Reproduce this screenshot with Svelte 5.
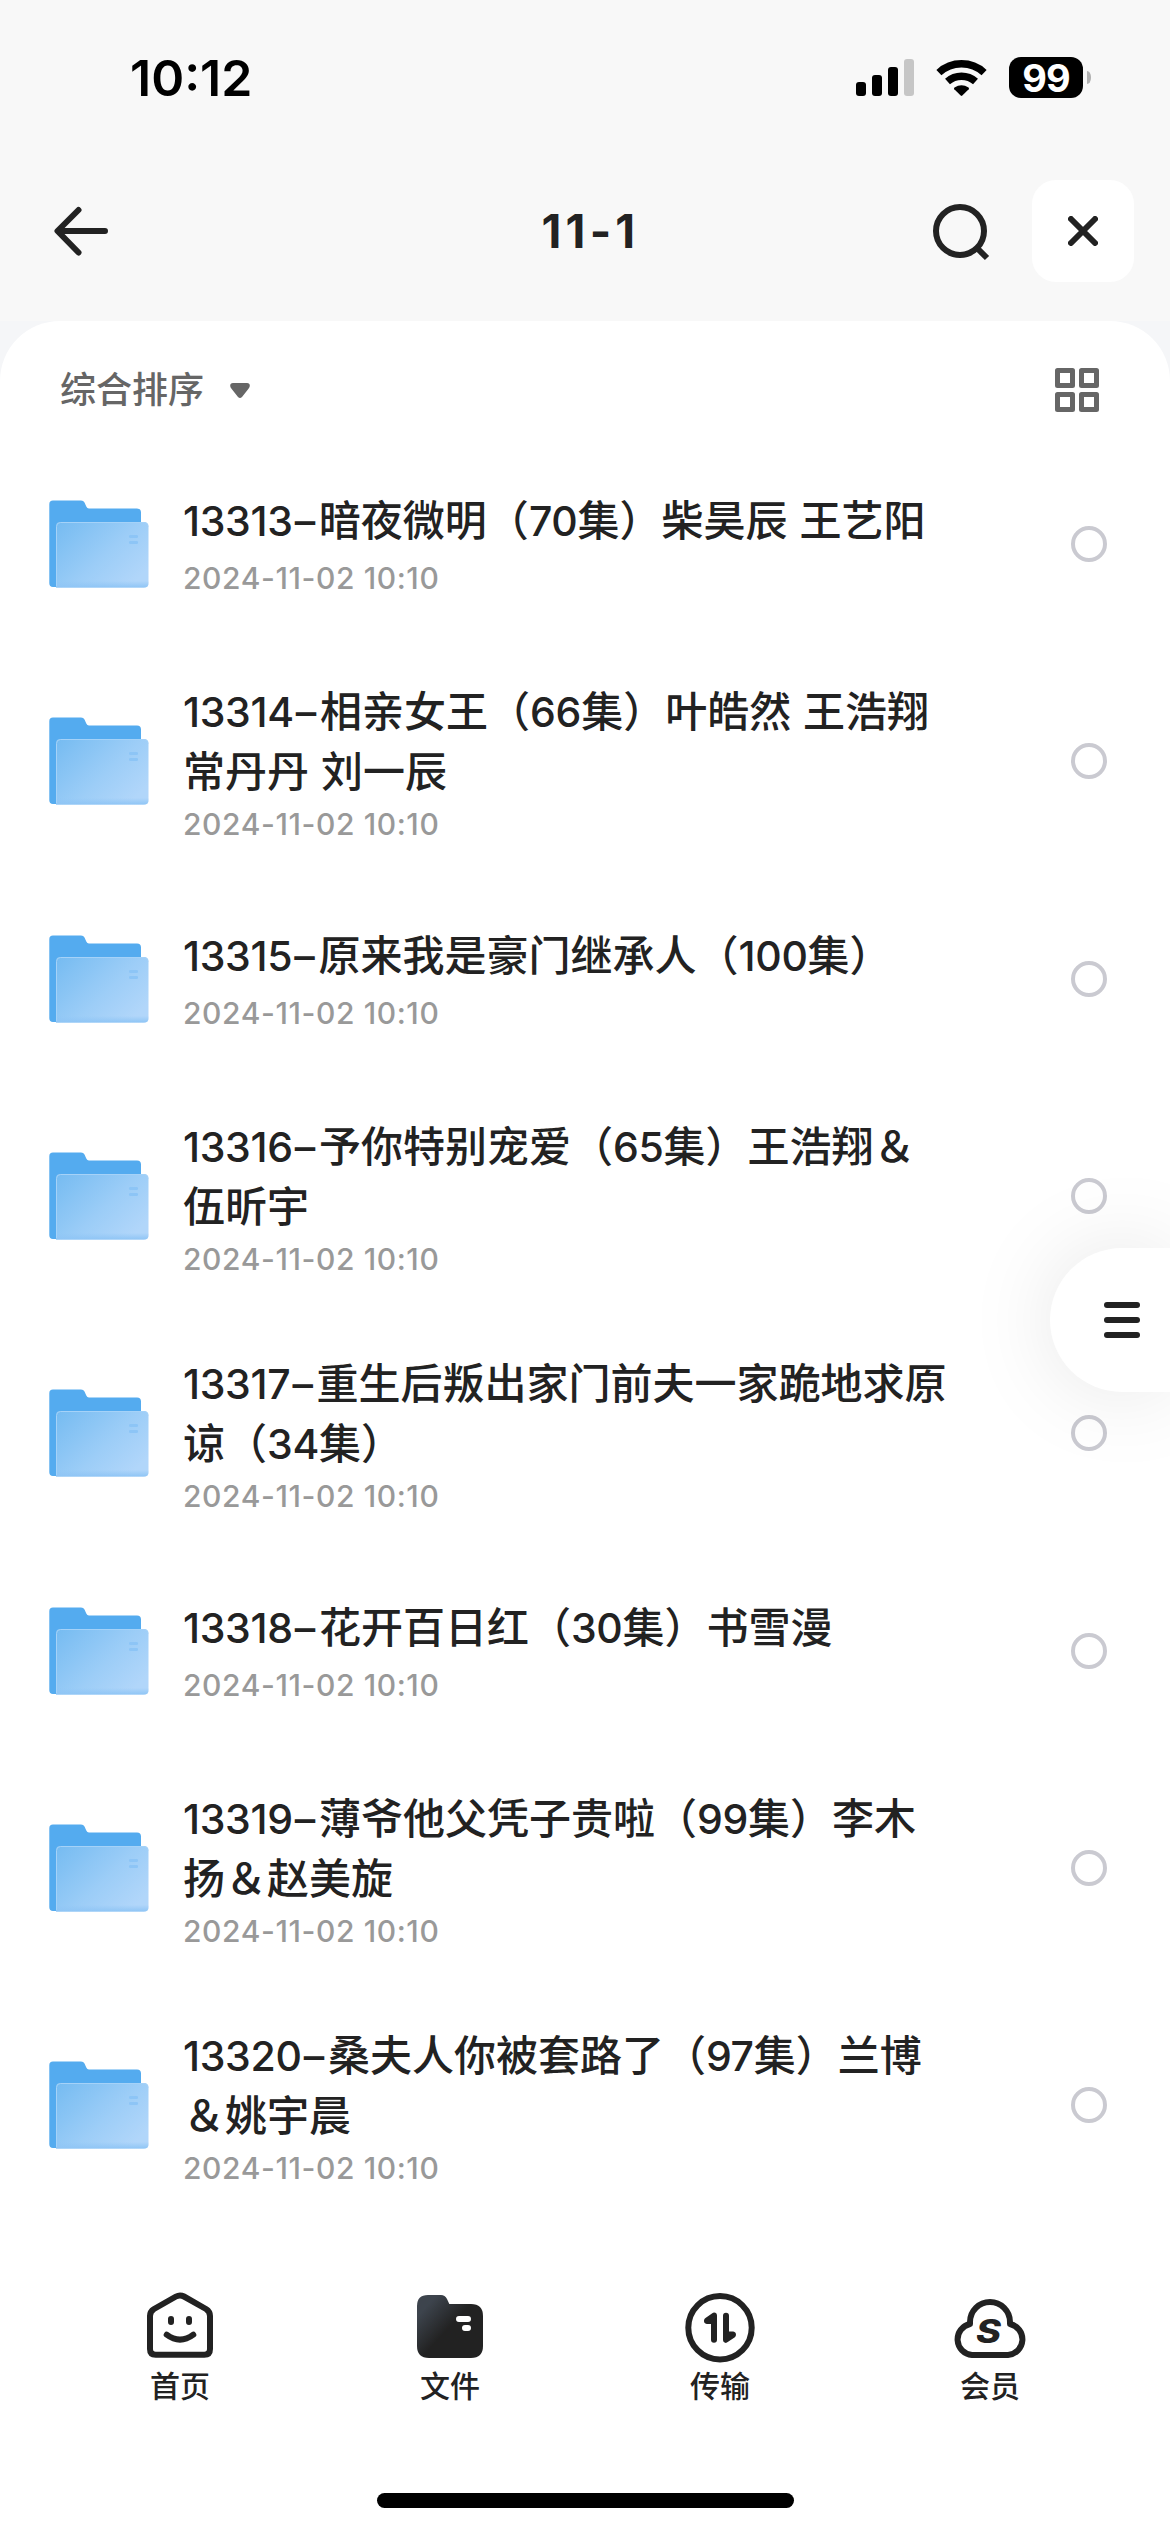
<script lang="ts">
	interface FileItem {
		title: string;
		date: string;
	}

	const files: FileItem[] = [
		{ title: '13313–暗夜微明（70集）柴昊辰 王艺阳', date: '2024-11-02 10:10' },
		{ title: '13314–相亲女王（66集）叶皓然 王浩翔\n常丹丹 刘一辰', date: '2024-11-02 10:10' },
		{ title: '13315–原来我是豪门继承人（100集）', date: '2024-11-02 10:10' },
		{ title: '13316–予你特别宠爱（65集）王浩翔＆\n伍昕宇', date: '2024-11-02 10:10' },
		{ title: '13317–重生后叛出家门前夫一家跪地求原\n谅（34集）', date: '2024-11-02 10:10' },
		{ title: '13318–花开百日红（30集）书雪漫', date: '2024-11-02 10:10' },
		{ title: '13319–薄爷他父凭子贵啦（99集）李木\n扬＆赵美旋', date: '2024-11-02 10:10' },
		{ title: '13320–桑夫人你被套路了（97集）兰博\n＆姚宇晨', date: '2024-11-02 10:10' }
	];

	const tabs = [
		{ id: 'home', label: '首页' },
		{ id: 'files', label: '文件' },
		{ id: 'transfer', label: '传输' },
		{ id: 'member', label: '会员' }
	];

	// digits and dashes get their own spacing, so split them from the Chinese text
	function runs(text: string) {
		return text.split(/([0-9]+|–)/).filter(Boolean);
	}
</script>

<div class="screen">
	<div class="status-bar">
		<span class="time">10:12</span>
		<div class="status-icons">
			<svg class="signal" width="58" height="38" viewBox="0 0 58 38">
				<rect x="0" y="23" width="10" height="14" rx="3" />
				<rect x="16" y="16" width="10" height="21" rx="3" />
				<rect x="32" y="8" width="10" height="29" rx="3" />
				<rect x="48" y="0" width="10" height="37" rx="3" fill="#c6c6c6" />
			</svg>
			<svg class="wifi" width="52" height="38" viewBox="0 0 52 38">
				<path d="M2.9 13.6a33.4 33.4 0 0 1 45.2 0" fill="none" stroke="#000" stroke-width="7.4" />
				<path d="M11.5 22.6a21 21 0 0 1 28 0" fill="none" stroke="#000" stroke-width="7.4" />
				<path d="M18.3 30.2q-.8-.9.2-1.6a12.3 12.3 0 0 1 14 0q1 .7.2 1.6l-6.4 6.4q-.8.8-1.6 0z" />
			</svg>
			<div class="battery">99</div>
			<div class="battery-tip"></div>
		</div>
	</div>

	<header>
		<button class="back" aria-label="返回">
			<svg width="60" height="60" viewBox="0 0 60 60" fill="none" stroke="#222" stroke-width="6" stroke-linecap="round" stroke-linejoin="round">
				<path d="M27.5 9L6.5 30l21 21.500M7 30h47" />
			</svg>
		</button>
		<h1>11-1</h1>
		<div class="actions">
			<svg width="60" height="60" viewBox="0 0 60 60" fill="none" stroke="#222" stroke-width="6">
				<circle cx="30" cy="30" r="24" />
				<path d="M46.500 46.500l10.500 10.500" />
			</svg>
			<button class="close" aria-label="关闭">
				<svg width="30" height="30" viewBox="0 0 30 30" fill="none" stroke="#222" stroke-width="6" stroke-linecap="round">
					<path d="M3 3l24 24M27 3L3 27" />
				</svg>
			</button>
		</div>
	</header>

	<main>
		<div class="sheet">
			<div class="toolbar">
				<div class="sort">
					<span>综合排序</span>
					<svg width="20" height="16" viewBox="0 0 20 16" fill="#666">
						<path d="M3 1h14q3 .3 2.800 3q-.2 1.500-1.500 3L12 15q-2 2-4 0L1.700 7Q.3 5.500.2 4 0 1.300 3 1z" />
					</svg>
				</div>
				<svg width="44" height="44" viewBox="0 0 44 44" fill="none" stroke="#666" stroke-width="5" stroke-linejoin="round">
					<rect x="2.500" y="2.500" width="15" height="15" />
					<rect x="26.500" y="2.500" width="15" height="15" />
					<rect x="2.500" y="26.500" width="15" height="15" />
					<rect x="26.500" y="26.500" width="15" height="15" />
				</svg>
			</div>

			<ul class="file-list">
				{#each files as file}
					<li class="file" class:two-line={file.title.includes('\n')}>
						<svg class="folder" width="100" height="88" viewBox="0 0 100 88">
							<defs>
								<linearGradient id="folder-front" x1="0" y1="0" x2="1" y2="0.7">
									<stop offset="0" stop-color="#75bbf1" />
									<stop offset="0.6" stop-color="#9ccdf7" />
									<stop offset="1" stop-color="#b1d6fa" />
								</linearGradient>
								<linearGradient id="folder-edge" x1="0" y1="0" x2="0" y2="1">
									<stop offset="0.9" stop-color="#8fc5f5" stop-opacity="0" />
									<stop offset="1" stop-color="#8fc5f5" />
								</linearGradient>
							</defs>
							<path d="M4 .5h28q2.500 0 3.500 2l1.800 4q.8 2 2.700 2h48q4 0 4 4V60H20v27H4q-3.700 0-3.700-3.700V4.200Q.3.500 4 .5z" fill="#54abef" />
							<path d="M11 22h84q4.500 0 4.500 4.500v56.500q0 4.500-4.500 4.500H7V26q0-4 4-4z" fill="url(#folder-front)" />
							<path d="M11 22h84q4.500 0 4.500 4.500v56.500q0 4.500-4.500 4.500H7V26q0-4 4-4z" fill="url(#folder-edge)" />
							<path d="M7.500 86V26.500q0-4 4-4H95q4 0 4 4" fill="none" stroke="#a5d2f8" />
							<rect x="80" y="35" width="9" height="3" rx="1.200" fill="#8dc5f6" />
							<rect x="80" y="41" width="9" height="3" rx="1.200" fill="#8dc5f6" />
						</svg>
						<div class="info">
							<h2>
								{#each file.title.split('\n') as line}
									<span class="line">{#each runs(line) as run}{#if run === '–'}<span class="num dash">{run}</span>{:else if /^[0-9]/.test(run)}<span class="num">{run}</span>{:else}{run}{/if}{/each}</span>
								{/each}
							</h2>
							<p>{file.date}</p>
						</div>
						<span class="check"></span>
					</li>
				{/each}
			</ul>
		</div>
	</main>

	<nav>
		{#each tabs as tab}
			<div class="tab">
				<svg width="72" height="72" viewBox="0 0 72 72" fill="none" stroke="#222" stroke-width="6" stroke-linecap="round" stroke-linejoin="round">
					{#if tab.id === 'home'}
						<path d="M6 24q0-4.500 4-7L32 4.500q4-2.200 8 0L62 17q4 2.500 4 7v33q0 5.700-5.700 5.700H11.700Q6 62.700 6 57z" />
						<path d="M27 27v3M45 27v3M22.700 42.700q13.300 10 26.600 0" />
					{:else if tab.id === 'files'}
						<defs>
							<linearGradient id="tab-folder" x1="0.1" y1="0.15" x2="0.5" y2="0.5">
								<stop offset="0.1" stop-color="#3d444d" />
								<stop offset="1" stop-color="#222" />
							</linearGradient>
						</defs>
						<path d="M14 3h13q4 0 6 4l2.300 5H57q12 0 12 12v30q0 12-12 12H15Q3 66 3 54V14Q3 3 14 3z" fill="url(#tab-folder)" stroke="none" />
						<path d="M45 27h9M51 36h3" stroke="#fff" />
					{:else if tab.id === 'transfer'}
						<circle cx="36" cy="35.700" r="31.700" />
						<g fill="#222" stroke="none">
							<path id="arrow-up" d="M33 23.500a2.800 2.800 0 0 0-4.700-2.200L21.500 26c-2.700 2-1.500 6 1.500 6h4v15.700a3 3 0 0 0 6 0z" />
							<use href="#arrow-up" transform="rotate(180 36 35.700)" />
						</g>
					{:else}
						<path d="M18 63A15.700 15.700 0 0 1 16 32v-2a20 20 0 0 1 40 0v2a15.700 15.700 0 0 1-2 31z" />
						<text class="badge-letter" x="22" y="50.700" textLength="25" lengthAdjust="spacingAndGlyphs">S</text>
					{/if}
				</svg>
				<span>{tab.label}</span>
			</div>
		{/each}
	</nav>

	<div class="home-indicator"></div>

	<button class="drawer" aria-label="菜单">
		<i></i>
		<i></i>
		<i></i>
	</button>
</div>

<style>
	:global(body) {
		background: #fff;
	}

	.screen {
		position: relative;
		width: 1170px;
		height: 2532px;
		overflow: hidden;
		display: flex;
		flex-direction: column;
		background: #fff;
		color: #222;
		font-family: Inter, 'Noto Sans CJK SC', sans-serif;
	}

	button {
		padding: 0;
		border: 0;
		background: none;
	}

	svg {
		display: block;
		flex-shrink: 0;
	}

	.status-bar {
		height: 156px;
		background: #f8f8f8;
		display: flex;
		justify-content: space-between;
		padding: 0 79px 0 130px;
		color: #000;
	}

	.time {
		font-size: 50px;
		font-weight: 600;
		line-height: 60px;
		padding-top: 48px;
	}

	.status-icons {
		display: flex;
		align-items: flex-start;
		padding-top: 57px;
	}

	.signal {
		margin: 2px 22px 0 0;
	}

	.wifi {
		margin: 2px 21px 0 0;
	}

	.battery {
		width: 74px;
		height: 41px;
		border-radius: 12px;
		background: #000;
		color: #fff;
		font-size: 38px;
		font-weight: 700;
		line-height: 42px;
		text-align: center;
		letter-spacing: -1px;
	}

	.battery-tip {
		width: 4px;
		height: 13px;
		margin: 14px 0 0 4px;
		border-radius: 0 4px 4px 0 / 0 6px 6px 0;
		background: #b2b2b2;
	}

	header {
		height: 165px;
		background: #f8f8f8;
		display: grid;
		grid-template-columns: 240px 1fr 240px;
		padding: 24px 36px 0 51px;
		box-sizing: border-box;
	}

	.back {
		height: 102px;
		display: flex;
		align-items: center;
	}

	h1 {
		margin: 0;
		font-size: 46px;
		font-weight: 700;
		line-height: 102px;
		text-align: center;
		letter-spacing: 4.2px;
		padding-right: 4px;
	}

	.actions {
		height: 102px;
		display: flex;
		align-items: center;
		justify-content: flex-end;
		gap: 42px;
	}

	.close {
		width: 102px;
		height: 102px;
		border-radius: 24px;
		background: #fff;
		display: flex;
		align-items: center;
		justify-content: center;
	}

	main {
		background: #f5f6f8;
	}

	.sheet {
		height: 1911px;
		border-radius: 60px 60px 0 0;
		background: #fff;
	}

	.toolbar {
		height: 123.5px;
		padding: 0 71px 0 60px;
		display: flex;
		justify-content: space-between;
		align-items: flex-start;
	}

	.toolbar > svg {
		margin-top: 47px;
	}

	.sort {
		display: flex;
		align-items: center;
		gap: 26px;
		margin-top: 42px;
		color: #666;
		font-size: 36px;
		font-weight: 500;
		line-height: 54px;
	}

	.file-list {
		list-style: none;
		margin: 0;
		padding: 0;
	}

	.file {
		height: 198px;
		display: flex;
		align-items: center;
		padding: 0 63px 0 49px;
	}

	.two-line {
		height: 237px;
	}

	.info {
		flex: 1;
		margin-left: 34px;
		padding-bottom: 3px;
	}

	.two-line .info {
		padding-bottom: 0;
	}

	h2 {
		margin: 0;
		font-family: 'Noto Sans CJK SC', sans-serif;
		font-size: 42px;
		font-weight: 500;
		line-height: 60px;
	}

	.line {
		display: block;
		height: 60px;
		white-space: pre;
		word-spacing: 2.5px;
	}

	.num {
		font-family: Inter, sans-serif;
		font-size: 41px;
		line-height: 1;
		letter-spacing: -0.3px;
	}

	.dash {
		margin: 0 4px 0 2px;
	}

	.info p {
		margin: 11px 0 0;
		color: #999;
		font-size: 30px;
		font-weight: 500;
		line-height: 38px;
		letter-spacing: 0.6px;
	}

	.two-line .info p {
		margin-top: 6px;
	}

	.check {
		width: 36px;
		height: 36px;
		box-sizing: border-box;
		border: 4px solid #cacad1;
		border-radius: 50%;
	}

	nav {
		display: flex;
		padding: 60px 45px 0;
		height: 201px;
	}

	.tab {
		flex: 1;
		display: flex;
		flex-direction: column;
		align-items: center;
		font-size: 30px;
		font-weight: 500;
		line-height: 44px;
	}

	.badge-letter {
		font-family: Inter, sans-serif;
		font-size: 32px;
		font-weight: 800;
		font-style: italic;
		fill: #222;
		stroke: none;
	}

	.home-indicator {
		width: 417px;
		height: 15px;
		border-radius: 8px;
		background: #000;
		margin-left: 377px;
	}

	/* half pill hanging off the right edge, over the list */
	.drawer {
		position: absolute;
		top: 1248px;
		right: 0;
		width: 120px;
		height: 144px;
		padding-left: 54px;
		border-radius: 72px 0 0 72px;
		background: #fff;
		box-shadow: 0 0 90px rgba(0, 0, 0, 0.1);
		display: flex;
		flex-direction: column;
		justify-content: center;
		gap: 9px;
	}

	.drawer i {
		width: 36px;
		height: 6px;
		border-radius: 3px;
		background: #222;
	}
</style>
